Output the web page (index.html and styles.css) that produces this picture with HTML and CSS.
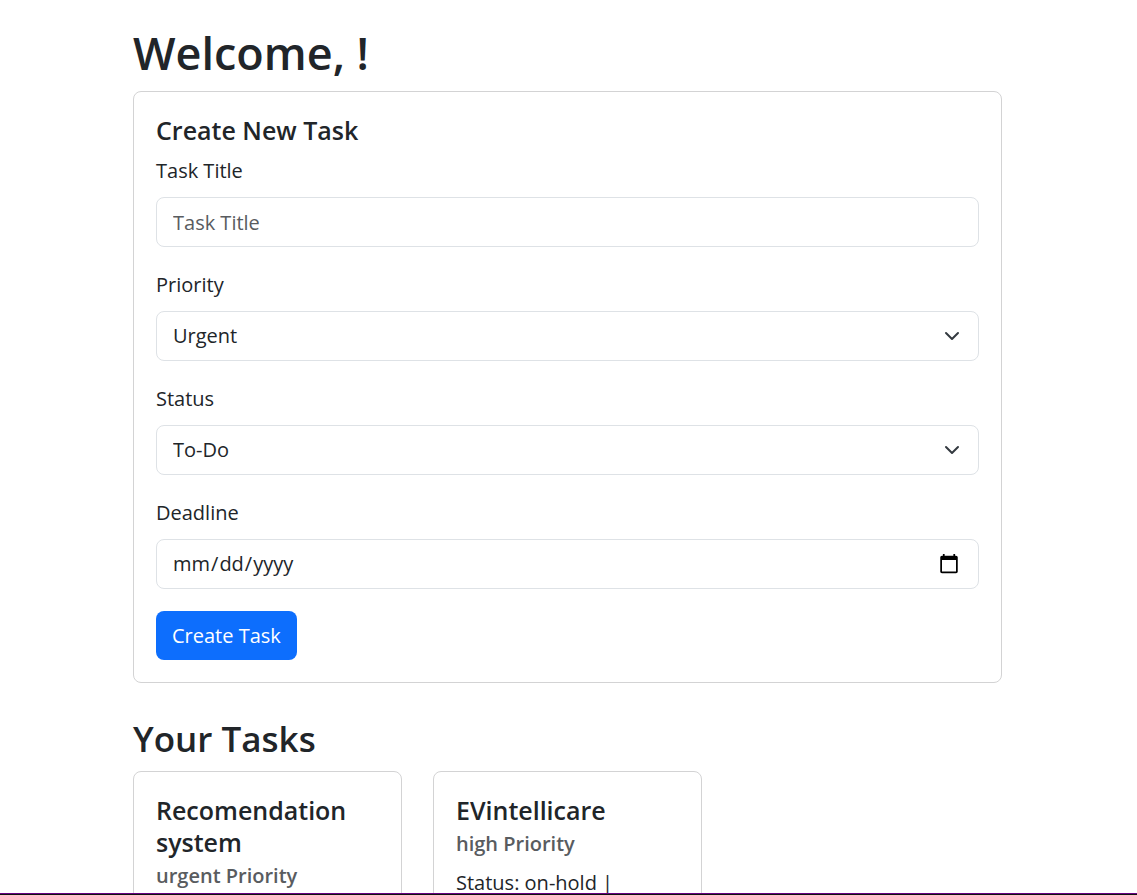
FILE: index.html
```html
<!DOCTYPE html>
<html lang="en">
<head>
<meta charset="utf-8">
<meta name="viewport" content="width=device-width, initial-scale=1">
<title>Tasks</title>
<link rel="stylesheet" href="styles.css">
</head>
<body>
<main class="container">
  <h1 class="welcome">Welcome, !</h1>
  <form class="card">
    <h2 class="card-title">Create New Task</h2>
    <div class="field">
      <label for="title">Task Title</label>
      <input class="control" id="title" type="text" placeholder="Task Title">
    </div>
    <div class="field">
      <label for="priority">Priority</label>
      <div class="control-wrap">
        <select class="control" id="priority"><option>Urgent</option><option>High</option><option>Low</option></select>
        <svg class="chevron" viewBox="0 0 16 16" aria-hidden="true"><path d="m2 5 6 6 6-6"/></svg>
      </div>
    </div>
    <div class="field">
      <label for="status">Status</label>
      <div class="control-wrap">
        <select class="control" id="status"><option>To-Do</option><option>On-Hold</option><option>Done</option></select>
        <svg class="chevron" viewBox="0 0 16 16" aria-hidden="true"><path d="m2 5 6 6 6-6"/></svg>
      </div>
    </div>
    <div class="field">
      <label for="deadline">Deadline</label>
      <input class="control date" id="deadline" type="date">
    </div>
    <button class="button" type="button">Create Task</button>
  </form>

  <h2 class="section-title">Your Tasks</h2>
  <section class="tasks">
    <article class="card">
      <h3 class="card-title task-name">Recomendation system</h3>
      <h4 class="priority">urgent Priority</h4>
    </article>
    <article class="card">
      <h3 class="card-title task-name">EVintellicare</h3>
      <h4 class="priority">high Priority</h4>
      <p class="status">Status: on-hold |</p>
    </article>
  </section>
</main>
<div class="edge"></div>
</body>
</html>
```
FILE: styles.css
```css
* { box-sizing: border-box; }
body {
  margin: 0;
  background: #fff;
  color: #212529;
  font-family: "Segoe UI", "Open Sans", "Noto Sans", sans-serif;
  font-size: 20px;
  line-height: 32px;
}
h1, h2, h3, h4, p { margin: 0; }
.container {
  width: 100%;
  max-width: 871px;
  margin: 0 auto;
  padding: 26px 2px 0 0;
}
.welcome {
  margin-bottom: 11px;
  font-size: 45px;
  font-weight: 600;
  line-height: 54px;
}
.card {
  padding: 22px;
  border: 1px solid #d3d3d4;
  border-radius: 8px;
}
.card-title {
  margin-bottom: 10px;
  font-size: 25px;
  font-weight: 600;
  line-height: 32px;
}
.field { margin-bottom: 22px; }
.field label {
  display: block;
  margin-bottom: 10px;
}
.control-wrap { position: relative; }
.control {
  display: block;
  width: 100%;
  height: 50px;
  padding: 0 16px;
  border: 1px solid #dee2e6;
  border-radius: 8px;
  background: #fff;
  color: #212529;
  font: inherit;
  appearance: none;
}
.control::placeholder { color: #595c5f; opacity: 1; }
.date { padding: 0 18px 0 15px; }
.date::-webkit-calendar-picker-indicator { width: 22px; height: 22px; padding: 0; }
.chevron {
  position: absolute;
  top: 17px;
  right: 19px;
  width: 16px;
  height: 16px;
  fill: none;
  stroke: #343a40;
  stroke-width: 2;
  stroke-linecap: round;
  stroke-linejoin: round;
  pointer-events: none;
}
.button {
  display: block;
  height: 49px;
  padding: 0 16px;
  border: 0;
  border-radius: 8px;
  background: #0d6efd;
  color: #fff;
  font: inherit;
}
form .card-title { margin-bottom: 9px; }
.section-title {
  margin: 32px 0 8px;
  font-size: 35px;
  font-weight: 600;
  line-height: 48px;
}
.tasks {
  display: grid;
  grid-template-columns: repeat(3, 1fr);
  gap: 31px;
}
.task-name { margin-bottom: 5px; }
.priority {
  margin-bottom: 10px;
  color: #595c5f;
  font-size: 20px;
  font-weight: 600;
  line-height: 26px;
}
.edge {
  position: fixed;
  right: 0;
  bottom: 0;
  left: 0;
  height: 2px;
  border-top: 1px solid #660080;
  background: #101010;
}
```
